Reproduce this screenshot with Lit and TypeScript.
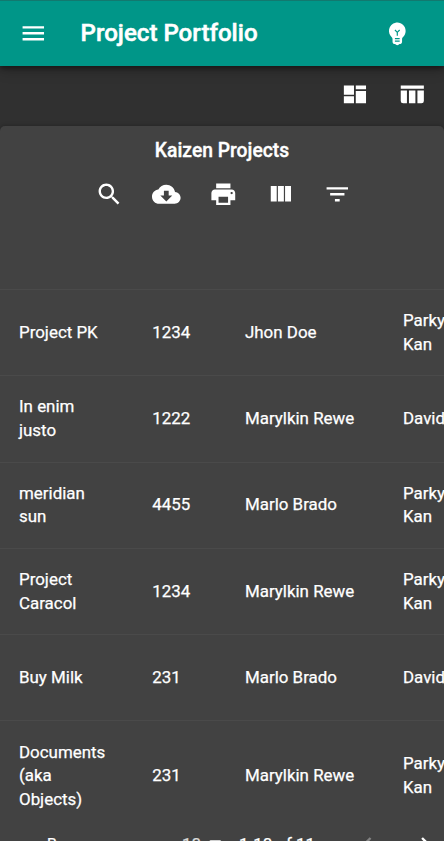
import { LitElement, html, css, svg } from "lit";
import { customElement, property } from "lit/decorators.js";

const icons: Record<string, string> = {
  menu: "M3 18h18v-2H3v2zm0-5h18v-2H3v2zm0-7v2h18V6H3z",
  bulb: "M12 3c-.46 0-.93.04-1.4.14-2.76.53-4.96 2.76-5.48 5.52-.48 2.61.48 5.01 2.22 6.56.43.38.66.91.66 1.47V19c0 1.1.9 2 2 2h.28c.35.6.98 1 1.72 1s1.38-.4 1.72-1H14c1.1 0 2-.9 2-2v-2.31c0-.55.22-1.09.64-1.46C18.09 13.95 19 12.08 19 10c0-3.87-3.13-7-7-7zm2 16h-4v-1h4v1zm0-2h-4v-1h4v1zm-1.5-5.59V14h-1v-2.59L9.67 9.59l.71-.71L12 10.5l1.62-1.62.71.71-1.83 1.82z",
  dashboard: "M2.4 4.6h8.5v7.7H2.4zM2.4 13.7h8.5v5.9H2.4zM12.4 4.6h8.6v3.1h-8.6zM12.4 9.3h8.6v10.3h-8.6z",
  table: "M2.3 4.6h19.4v2.7H2.3zM2.3 8.8h5.2v10.8H4.3a2 2 0 0 1-2-2zM9.2 8.8h5.4v10.8H9.2zM16.3 8.8h5.4v8.8a2 2 0 0 1-2 2h-3.4z",
  search: "M15.5 14h-.79l-.28-.27C15.41 12.59 16 11.11 16 9.5 16 5.91 13.09 3 9.5 3S3 5.91 3 9.5 5.91 16 9.5 16c1.61 0 3.09-.59 4.23-1.57l.27.28v.79l5 4.99L20.49 19l-4.99-5zm-6 0C7.01 14 5 11.99 5 9.5S7.01 5 9.5 5 14 7.01 14 9.5 11.99 14 9.5 14z",
  download: "M19.35 10.04C18.67 6.59 15.64 4 12 4 9.11 4 6.6 5.64 5.35 8.04 2.34 8.36 0 10.91 0 14c0 3.31 2.69 6 6 6h13c2.76 0 5-2.24 5-5 0-2.64-2.05-4.78-4.65-4.96zM17 13l-5 5-5-5h3V9h4v4h3z",
  print: "M19 8H5c-1.66 0-3 1.34-3 3v6h4v4h12v-4h4v-6c0-1.66-1.34-3-3-3zm-3 11H8v-5h8v5zm3-7c-.55 0-1-.45-1-1s.45-1 1-1 1 .45 1 1-.45 1-1 1zm-1-9H6v4h12V3z",
  columns: "M10 18h5V5h-5v13zm-6 0h5V5H4v13zM16 5v13h5V5h-5z",
  filter: "M10 18h4v-2h-4v2zM3 6v2h18V6H3zm3 7h12v-2H6v2z",
  drop: "M7 10l5 5 5-5z",
  prev: "M15.41 7.41L14 6l-6 6 6 6 1.41-1.41L10.83 12z",
  next: "M10 6L8.59 7.41 13.17 12l-4.58 4.59L10 18l6-6z",
};

@customElement("md-icon")
class MdIcon extends LitElement {
  @property() name = "menu";
  static styles = css`
    :host { display: block; width: 28.6px; height: 28.6px; flex: none; }
    svg { display: block; width: 100%; height: 100%; fill: currentColor; }
  `;
  render() {
    return html`<svg viewBox="0 0 24 24">${svg`<path d=${icons[this.name]}></path>`}</svg>`;
  }
}

const projects = [
  ["Project PK", "1234", "Jhon Doe", "Parky Kan"],
  ["In enim justo", "1222", "Marylkin Rewe", "David"],
  ["meridian sun", "4455", "Marlo Brado", "Parky Kan"],
  ["Project Caracol", "1234", "Marylkin Rewe", "Parky Kan"],
  ["Buy Milk", "231", "Marlo Brado", "David"],
  ["Documents (aka Objects)", "231", "Marylkin Rewe", "Parky Kan"],
];

@customElement("app-root")
class AppRoot extends LitElement {
  static styles = css`
    :host {
      display: flex;
      flex-direction: column;
      height: 841px;
      overflow: hidden;
      background: #303030;
      color: #fff;
      font-family: Roboto, sans-serif;
      -webkit-text-stroke: 0.25px currentColor;
    }
    * { box-sizing: border-box; }
    .bar {
      flex: none;
      height: 66px;
      display: flex;
      align-items: center;
      padding: 0 32px 0 19px;
      background: #009688;
      border-top: 1px solid #12796f;
      box-shadow: 0 2px 5px rgba(0, 0, 0, 0.45), 0 5px 12px rgba(0, 0, 0, 0.2);
      z-index: 1;
    }
    .bar h1 {
      flex: 1;
      margin: -2px 0 0 33px;
      font-size: 24.1px;
      font-weight: 500;
      line-height: 32px;
      -webkit-text-stroke-width: 0.5px;
    }
    .views {
      flex: none;
      height: 60px;
      display: flex;
      justify-content: flex-end;
      align-items: center;
      gap: 29px;
      padding: 0 17.3px 3px 0;
    }
    .card {
      flex: 1;
      min-height: 0;
      background: #424242;
      border-radius: 5px 5px 0 0;
      box-shadow: 0 0 4px rgba(0, 0, 0, 0.3);
      overflow: hidden;
    }
    .head { height: 163px; padding-top: 11px; text-align: center; }
    .head h2 {
      margin: 0;
      font-size: 19.3px;
      font-weight: 500;
      line-height: 28px;
      -webkit-text-stroke-width: 0.35px;
    }
    .tools {
      display: flex;
      justify-content: center;
      gap: 28.4px;
      margin-top: 14.5px;
      padding-left: 2.4px;
    }
    .row {
      display: grid;
      grid-template-columns: 133.2px 92.8px 158px 120px;
      width: 504px;
      height: 86.3px;
      align-items: center;
      border-top: 1px solid #4a4a4a;
      font-size: 16.92px;
      line-height: 23.6px;
    }
    .row.last { height: 110px; }
    .cell { padding-left: 19px; padding-right: 19px; }
    .cell.narrow { padding-right: 60px; }
    .name { padding-right: 26px; }
    .one { white-space: nowrap; padding-right: 0; }
    .foot {
      display: grid;
      grid-template-columns: 135px 18.5px 38.5px 114px 58px 30px;
      align-items: center;
      height: 30px;
      margin-top: -1px;
      padding-left: 47px;
      font-size: 16.9px;
      line-height: 24px;
      white-space: nowrap;
    }
    .small { font-size: 15.5px; }
    .dim { opacity: 0.8; }
    .drop { margin-top: -5px; opacity: 0.75; }
    .off { opacity: 0.35; }
  `;

  render() {
    return html`
      <header class="bar">
        <md-icon name="menu"></md-icon>
        <h1>Project Portfolio</h1>
        <md-icon name="bulb"></md-icon>
      </header>
      <nav class="views">
        <md-icon name="dashboard"></md-icon>
        <md-icon name="table"></md-icon>
      </nav>
      <section class="card">
        <div class="head">
          <h2>Kaizen Projects</h2>
          <div class="tools">
            ${["search", "download", "print", "columns", "filter"].map(
              (n) => html`<md-icon name=${n}></md-icon>`
            )}
          </div>
        </div>
        ${projects.map(
          (p, i) => html`<div class="row ${i === projects.length - 1 ? "last" : ""}">
            <div class="cell name">${p[0]}</div>
            <div class="cell one">${p[1]}</div>
            <div class="cell one">${p[2]}</div>
            <div class="cell narrow">${p[3]}</div>
          </div>`
        )}
        <footer class="foot">
          <span class="small">Rows per page:</span>
          <span class="dim">10</span>
          <md-icon class="drop" name="drop"></md-icon>
          <span>1-10 of 11</span>
          <md-icon class="off" name="prev"></md-icon>
          <md-icon name="next"></md-icon>
        </footer>
      </section>
    `;
  }
}
